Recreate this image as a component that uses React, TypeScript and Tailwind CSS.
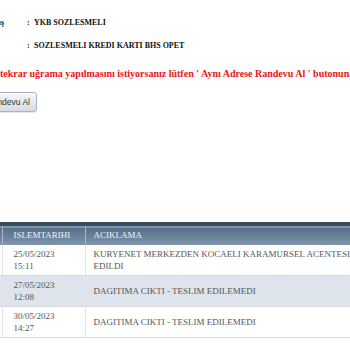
import React from "react";

const rows = [
  { date: "25/05/2023", time: "15:11", text: "KURYENET MERKEZDEN KOCAELI KARAMURSEL ACENTESINE TESLIM EDILDI" },
  { date: "27/05/2023", time: "12:08", text: "DAGITIMA CIKTI - TESLIM EDILEMEDI" },
  { date: "30/05/2023", time: "14:27", text: "DAGITIMA CIKTI - TESLIM EDILEMEDI" },
];

export default function App() {
  return (
    <div className="w-[350px] h-[350px] overflow-hidden bg-white font-['Liberation_Serif',serif]">
      <div className="pt-[11px]">
        {/* info rows */}
        <div className="flex h-[23px] items-center text-[8px] font-bold text-[#111]">
          <span className="shrink-0 -ml-[80px] w-[107px] pr-[23px] text-right whitespace-nowrap overflow-hidden">
            Kart Başvuruş
          </span>
          <span className="w-[7px]">:</span>
          <span>YKB SOZLESMELI</span>
        </div>
        <div className="flex h-[23px] items-center text-[8px] font-bold text-[#111]">
          <span className="shrink-0 w-[27px]" />
          <span className="w-[7px]">:</span>
          <span>SOZLESMELI KREDI KARTI BHS OPET</span>
        </div>

        <p className="mt-[10px] h-[14px] leading-[14px] whitespace-nowrap text-[10px] font-bold text-[#e8141b]">
          tekrar uğrama yapılmasını istiyorsanız lütfen ' Aynı Adrese Randevu Al ' butonuna tıklayınız.
        </p>

        <div className="mt-[11px] flex justify-end w-[37px]">
          <button className="shrink-0 h-[20px] pl-[6px] pr-[6px] rounded-[3px] border border-[#a9b3bd] bg-gradient-to-b from-[#f6f8fa] to-[#d6dce2] text-[8.5px] text-[#333] font-['Liberation_Sans',sans-serif] whitespace-nowrap shadow-[inset_0_1px_0_#fff,0_1px_1px_rgba(0,0,0,0.1)]">
            Aynı Adrese Randevu Al
          </button>
        </div>

        <table className="mt-[110px] -ml-[60px] w-[480px] table-fixed border-collapse text-[9px] text-[#555]">
          <thead>
            <tr className="border-t-[4px] border-[#3d4d60] bg-gradient-to-b from-[#566e87] to-[#8097ad] text-[#eef2f6] text-left">
              <th className="w-[62px] h-[21px] font-normal border-r border-[#a9b8c7]" />
              <th className="w-[83px] h-[21px] font-normal border-r border-[#a9b8c7] pl-[11px]">ISLEMTARIHI</th>
              <th className="w-[335px] h-[21px] font-normal pl-[8px]">ACIKLAMA</th>
            </tr>
          </thead>
          <tbody>
            {rows.map((r, i) => (
              <tr
                key={i}
                className={`border-b border-[#d5dbe1] ${i % 2 === 1 ? "bg-[#dde4eb]" : "bg-white"}`}
              >
                <td className="border-r border-[#dfe4e9] leading-[12px] py-[2.5px]" />
                <td className="border-r border-[#dfe4e9] pl-[11px] leading-[12.5px] py-[2.5px] align-middle">
                  {r.date}
                  <br />
                  {r.time}
                </td>
                <td className="pl-[8px] leading-[12.5px] py-[2.5px] align-middle">{r.text}</td>
              </tr>
            ))}
          </tbody>
        </table>
      </div>
    </div>
  );
}
